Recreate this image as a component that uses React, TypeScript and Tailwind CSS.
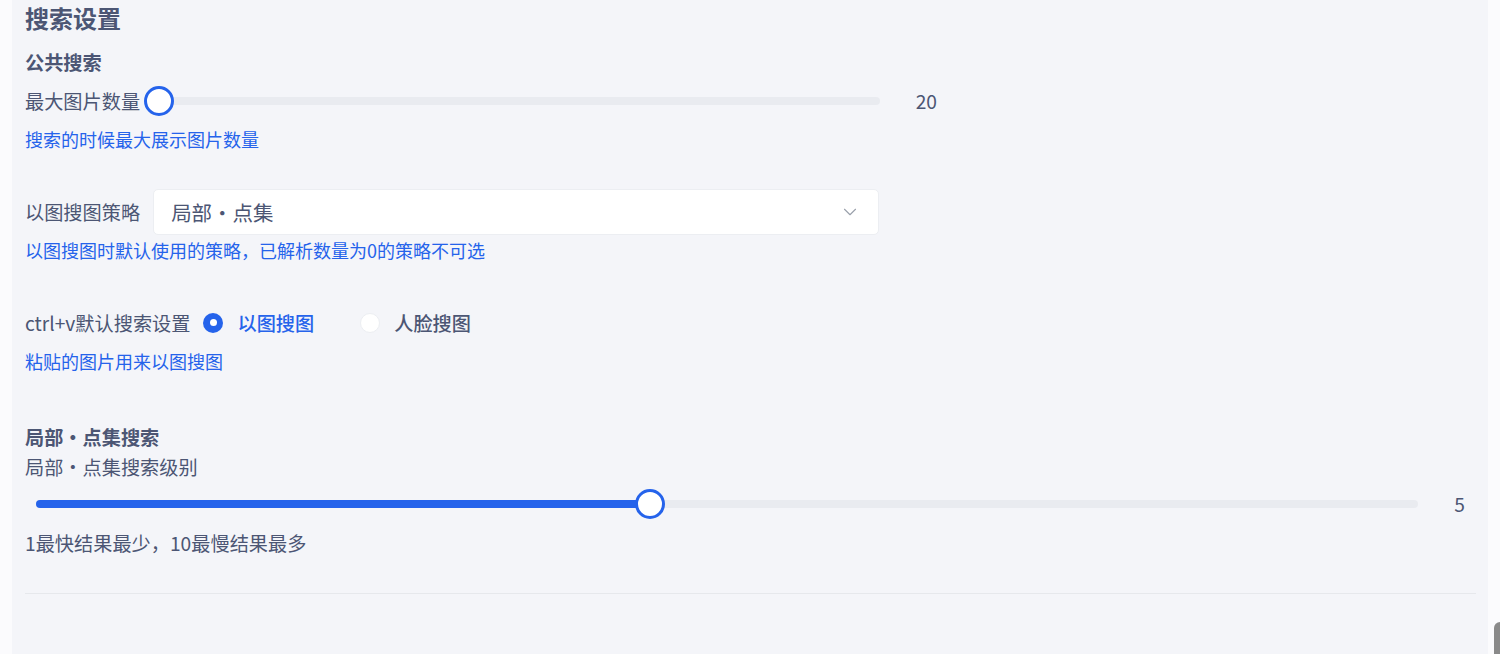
import React from 'react'
import { ChevronDown } from 'lucide-react'

const font = { fontFamily: '"Noto Sans CJK SC", "Noto Sans", sans-serif' }

function Slider({ value, min, max, fill }: { value: number; min: number; max: number; fill?: boolean }) {
  const pct = ((value - min) / (max - min)) * 100
  return (
    <div className="relative h-[30px] flex-1 flex items-center">
      <div className="relative h-[8px] w-full rounded-full bg-[#e9ebf0]">
        {fill && <div className="absolute left-0 top-0 h-full rounded-full bg-[#2563eb]" style={{ width: `${pct}%` }} />}
        {/* thumb sits on top of the track */}
        <div
          className="absolute top-1/2 h-[30px] w-[30px] -translate-x-1/2 -translate-y-1/2 rounded-full border-[3px] border-[#2563eb] bg-white"
          style={{ left: `${pct}%` }}
        />
      </div>
    </div>
  )
}

function Radio({ checked, label }: { checked?: boolean; label: string }) {
  return (
    <label className="flex items-center gap-[14px]">
      {checked ? (
        <span className="flex h-[20px] w-[20px] items-center justify-center rounded-full bg-[#2563eb]">
          <span className="h-[7px] w-[7px] rounded-full bg-white" />
        </span>
      ) : (
        <span className="h-[20px] w-[20px] rounded-full border border-[#eceef2] bg-white" />
      )}
      <span className={checked ? 'font-medium text-[#2563eb]' : 'font-medium text-[#4c5674]'}>{label}</span>
    </label>
  )
}

export default function App() {
  return (
    <div className="relative flex h-[654px] overflow-hidden bg-[#fbfbfd]" style={font}>
      <div className="ml-[12px] w-[1476px] bg-[#f4f5f9] pl-[13px] pr-[12px] text-[#4c5674]">
        <h1 className="h-[36px] text-[24px] font-bold leading-[36px]">搜索设置</h1>

        {/* 公共搜索 */}
        <h2 className="mt-[12px] text-[19.2px] font-bold leading-[28px]">公共搜索</h2>
        <div className="mt-[10px] flex w-[912px] items-center">
          <span className="mr-[5px] text-[19.2px] leading-[30px]">最大图片数量</span>
          <div className="ml-[14px] flex flex-1">
            <Slider value={20} min={20} max={200} />
          </div>
          <span className="ml-[36px] text-[19.2px] leading-[30px]">20</span>
        </div>
        <p className="mt-[9px] text-[18px] leading-[28px] text-[#2563eb]">搜索的时候最大展示图片数量</p>

        <div className="mt-[36px] flex items-center gap-[13px]">
          <span className="text-[19.2px]">以图搜图策略</span>
          <div className="flex h-[46px] w-[726px] items-center justify-between rounded-[5px] border border-[#eceef2] bg-white pl-[17px] pr-[17px]">
            <span className="text-[20.5px]">局部・点集</span>
            <ChevronDown size={22} strokeWidth={1.2} className="text-[#9aa0ab]" />
          </div>
        </div>
        <p className="mt-[2px] text-[18px] leading-[26px] text-[#2563eb]">以图搜图时默认使用的策略，已解析数量为0的策略不可选</p>

        <div className="mt-[45px] flex h-[30px] items-center text-[19.2px]">
          <span className="mr-[13px]">ctrl+v默认搜索设置</span>
          <Radio checked label="以图搜图" />
          <div className="ml-[46px]">
            <Radio label="人脸搜图" />
          </div>
        </div>
        <p className="mt-[9px] text-[18px] leading-[28px] text-[#2563eb]">粘贴的图片用来以图搜图</p>

        {/* 局部・点集搜索 */}
        <h2 className="mt-[48px] text-[19.2px] font-bold leading-[28px]">局部・点集搜索</h2>
        <p className="mt-[2px] text-[19.2px] leading-[28px]">局部・点集搜索级别</p>
        <div className="mt-[8px] flex items-center pl-[11px]">
          <Slider value={5} min={1} max={10} fill />
          <span className="w-[58px] pr-[11px] text-right text-[19.2px]">5</span>
        </div>
        <p className="mt-[10px] text-[19.2px] leading-[28px]">1最快结果最少，10最慢结果最多</p>

        <div className="mt-[36px] border-t border-[#e6e8ec]" />
      </div>

      {/* page scrollbar thumb */}
      <div className="absolute right-0 top-[622px] h-[40px] w-[6px] rounded-tl-[6px] bg-[#8a8a8a]" />
    </div>
  )
}
